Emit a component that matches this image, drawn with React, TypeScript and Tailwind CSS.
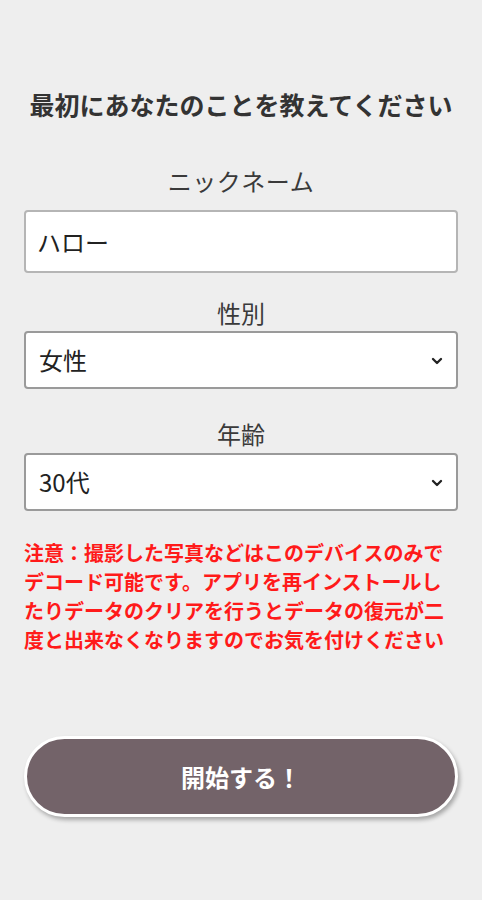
import { ChevronDown } from "lucide-react";

const font = { fontFamily: '"Noto Sans CJK JP", "Noto Sans", sans-serif' };

export default function App() {
  return (
    <div
      className="min-h-[900px] w-full bg-[#eeeeee] text-[#333333] flex flex-col items-center px-6 pt-[86px]"
      style={font}
    >
      <h1 className="text-[25px] font-bold leading-[36px] text-center whitespace-nowrap">
        最初にあなたのことを教えてください
      </h1>

      <label className="mt-[41px] text-[24px] leading-[36px] text-[#3a3a3a] tracking-[0.5px]">
        ニックネーム
      </label>
      <input
        defaultValue="ハロー"
        className="mt-[11px] w-full h-[63px] bg-white border-2 border-[#b5b5b5] rounded-[4px] px-[11px] text-[24px] text-[#222] outline-none"
      />

      <label className="mt-[22px] text-[24px] leading-[36px] text-[#3a3a3a]">性別</label>
      <div className="relative w-full">
        <select
          defaultValue="女性"
          className="appearance-none w-full h-[58px] bg-white border-2 border-[#9a9a9a] rounded-[4px] px-[13px] text-[24px] text-[#222] outline-none"
        >
          <option>男性</option>
          <option>女性</option>
        </select>
        <ChevronDown
          size={16}
          strokeWidth={3.5}
          className="absolute right-[13px] top-[22px] text-[#222] pointer-events-none"
        />
      </div>

      <label className="mt-[27px] text-[24px] leading-[36px] text-[#3a3a3a]">年齢</label>
      <div className="relative w-full mt-[1px]">
        <select
          defaultValue="30代"
          className="appearance-none w-full h-[58px] bg-white border-2 border-[#9a9a9a] rounded-[4px] px-[13px] text-[24px] text-[#222] outline-none"
        >
          <option>10代</option>
          <option>20代</option>
          <option>30代</option>
          <option>40代</option>
        </select>
        <ChevronDown
          size={16}
          strokeWidth={3.5}
          className="absolute right-[13px] top-[22px] text-[#222] pointer-events-none"
        />
      </div>

      <p className="mt-[27px] w-full text-[20px] leading-[29px] font-bold text-[#ff1a1a]">
        注意：撮影した写真などはこのデバイスのみでデコード可能です。アプリを再インストールしたりデータのクリアを行うとデータの復元が二度と出来なくなりますのでお気を付けください
      </p>

      <button className="mt-[82px] w-full h-[81px] rounded-full bg-[#736369] border-[3px] border-white shadow-[2px_3px_4px_rgba(0,0,0,0.3)] text-white text-[24px] font-bold">
        開始する！
      </button>
    </div>
  );
}
